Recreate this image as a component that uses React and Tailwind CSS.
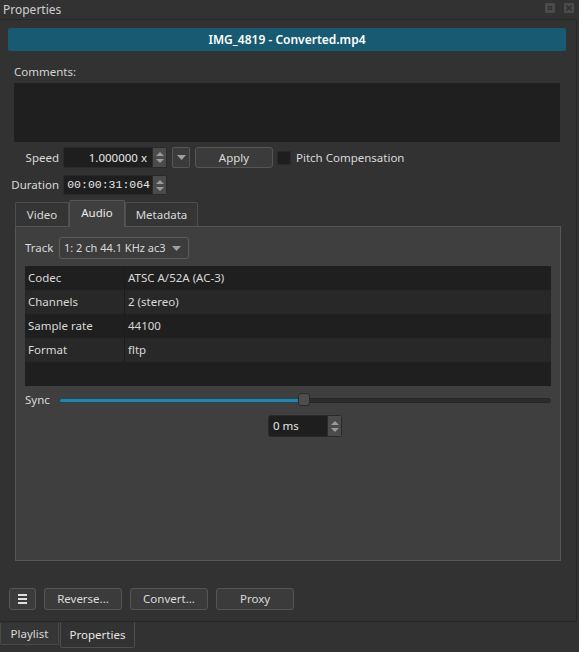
import React from 'react'

// small up/down arrow column used by the spin boxes
function SpinArrows({ className = '' }) {
  return (
    <div className={`flex w-[14px] flex-col items-center justify-center gap-[3px] border-l border-[#2a2a2a] bg-[#4b4b4b] ${className}`}>
      <svg width="8" height="4" viewBox="0 0 8 4"><path d="M0 4 L4 0 L8 4 Z" fill="#9a9a9a" /></svg>
      <svg width="8" height="4" viewBox="0 0 8 4"><path d="M0 0 L4 4 L8 0 Z" fill="#9a9a9a" /></svg>
    </div>
  )
}

function DownTri() {
  return (
    <svg width="9" height="5" viewBox="0 0 9 5"><path d="M0 0 L4.5 5 L9 0 Z" fill="#a0a0a0" /></svg>
  )
}

function Button({ children, className = '' }) {
  return (
    <div className={`flex h-[22px] items-center justify-center rounded-[3px] border border-[#565656] bg-[#3b3b3b] text-[#dcdcdc] ${className}`}>
      {children}
    </div>
  )
}

const ROWS = [
  ['Codec', 'ATSC A/52A (AC-3)'],
  ['Channels', '2 (stereo)'],
  ['Sample rate', '44100'],
  ['Format', 'fltp'],
  ['', ''],
]

export default function App() {
  return (
    <div className="flex h-[652px] w-[579px] flex-col bg-[#323232] font-['Noto_Sans',sans-serif] text-[11.5px] text-[#d9d9d9]">
      {/* dock title */}
      <div className="flex h-[19px] items-center justify-between pl-[3px] pr-[5px]">
        <span className="text-[12px] text-[#cfcfcf]">Properties</span>
        <div className="flex items-center gap-[9px] pb-[4px]">
          <div className="flex h-[10px] w-[10px] items-center justify-center rounded-[1px] bg-[#4a4a4a]">
            <div className="h-[4px] w-[4px] border border-[#2e2e2e]" />
          </div>
          <div className="flex h-[10px] w-[10px] items-center justify-center rounded-[1px] bg-[#4a4a4a]">
            <svg width="6" height="6" viewBox="0 0 6 6"><path d="M0.5 0.5 L5.5 5.5 M5.5 0.5 L0.5 5.5" stroke="#2e2e2e" strokeWidth="1.2" /></svg>
          </div>
        </div>
      </div>

      {/* dock body */}
      <div className="flex h-[603px] w-[577px] flex-col border-y border-r border-[#272727]">
        <div className="ml-[8px] mt-[8px] flex h-[23px] w-[558px] items-center justify-center rounded-[2px] bg-[#175a72] text-[12px] font-semibold text-white">
          IMG_4819 - Converted.mp4
        </div>

        <div className="ml-[14px] mt-[13px] flex h-[16px] items-center text-[#d4d4d4]">Comments:</div>
        <div className="ml-[14px] mt-[3px] h-[59px] w-[546px] bg-[#1f1f1f]" />

        {/* speed */}
        <div className="mt-[5px] flex h-[21px] items-center">
          <div className="w-[60px] pr-[1px] text-right">Speed</div>
          <div className="ml-[3px] flex h-full w-[104px] rounded-[2px] border border-[#2a2a2a] bg-[#1e1e1e]">
            <div className="flex flex-1 items-center justify-end pr-[5px] text-[#e6e6e6]">1.000000 x</div>
            <SpinArrows />
          </div>
          <div className="ml-[5px] flex h-full w-[18px] items-center justify-center rounded-[2px] border border-[#565656] bg-[#3b3b3b]">
            <DownTri />
          </div>
          <Button className="ml-[5px] !h-[21px] w-[78px]">Apply</Button>
          <div className="ml-[4px] h-[14px] w-[14px] border border-[#2a2a2a] bg-[#1e1e1e]" />
          <span className="ml-[5px]">Pitch Compensation</span>
        </div>

        {/* duration */}
        <div className="mt-[7px] flex h-[20px] items-center">
          <div className="w-[60px] pr-[1px] text-right">Duration</div>
          <div className="ml-[3px] flex h-full w-[104px] rounded-[2px] border border-[#2a2a2a] bg-[#1e1e1e]">
            <div className="flex flex-1 items-center justify-end pr-[2px] font-['Liberation_Mono',monospace] text-[11.5px] text-[#e6e6e6]">00:00:31:064</div>
            <SpinArrows />
          </div>
        </div>

        {/* tabs */}
        <div className="ml-[15px] mt-[5px] flex h-[26px] items-end">
          <div className="flex h-[24px] w-[54px] items-center justify-center rounded-t-[2px] border border-b-0 border-[#4e4e4e] bg-[#353535]">Video</div>
          <div className="relative z-10 -mb-px flex h-[27px] w-[56px] items-center justify-center rounded-t-[2px] border border-b-0 border-[#565656] bg-[#3f3f3f] pb-[3px] text-[#eaeaea]">Audio</div>
          <div className="flex h-[24px] w-[73px] items-center justify-center rounded-t-[2px] border border-b-0 border-[#4e4e4e] bg-[#353535]">Metadata</div>
        </div>

        <div className="ml-[15px] flex h-[335px] w-[546px] flex-col border border-[#565656] bg-[#3f3f3f] px-[9px]">
          <div className="mt-[10px] flex h-[22px] items-center">
            <span className="w-[34px]">Track</span>
            <div className="flex h-full w-[130px] items-center gap-[6px] whitespace-nowrap rounded-[3px] border border-[#5a5a5a] bg-[#3c3c3c] pl-[4px] text-[11px]">
              <span>1: 2 ch 44.1 KHz ac3</span>
              <DownTri />
            </div>
          </div>

          <div className="mt-[7px] flex flex-col">
            {ROWS.map(([k, v], i) => (
              <div key={i} className={`flex h-[24px] items-center ${i % 2 ? 'bg-[#282828]' : 'bg-[#1f1f1f]'}`}>
                <div className={`flex h-full w-[100px] items-center pl-[3px] ${k ? 'border-r border-[#1c1c1c]' : ''}`}>{k}</div>
                <div className="pl-[3px]">{v}</div>
              </div>
            ))}
          </div>

          {/* audio sync */}
          <div className="mt-[7px] flex">
            <span className="mt-[-2px] w-[34px]">Sync</span>
            <div className="flex flex-1 flex-col items-center">
              <div className="relative h-[14px] w-full">
                <div className="absolute left-0 right-0 top-[5px] h-[5px] rounded-full border border-[#262626] bg-[#2c2c2c]" />
                <div className="absolute left-0 top-[5px] h-[5px] w-[245px] rounded-l-full border border-[#1d4a5c] bg-[#2a82a8]" />
                <div className="absolute left-[239px] top-0 h-[13px] w-[12px] rounded-[3px] border border-[#2a2a2a] bg-[#4e4e4e]" />
              </div>
              <div className="mt-[8px] flex h-[22px] w-[74px] rounded-[3px] border border-[#2a2a2a] bg-[#1e1e1e]">
                <div className="flex flex-1 items-center pl-[4px] text-[#e6e6e6]">0 ms</div>
                <SpinArrows />
              </div>
            </div>
          </div>
        </div>

        {/* actions */}
        <div className="ml-[9px] mt-[27px] flex gap-[8px]">
          <Button className="w-[27px]">
            <svg width="9" height="10" viewBox="0 0 9 10"><path d="M0 1 H9 M0 5 H9 M0 9 H9" stroke="#e0e0e0" strokeWidth="2" /></svg>
          </Button>
          <Button className="w-[78px]">Reverse...</Button>
          <Button className="w-[78px]">Convert...</Button>
          <Button className="w-[78px]">Proxy</Button>
        </div>
      </div>

      {/* bottom dock tabs */}
      <div className="flex items-start">
        <div className="mt-[1px] flex h-[22px] w-[59px] items-center justify-center rounded-b-[2px] border border-t-0 border-[#4a4a4a] bg-[#363636]">Playlist</div>
        <div className="ml-[1px] flex h-[26px] w-[75px] items-center justify-center rounded-b-[2px] border border-t-0 border-[#4e4e4e] bg-[#323232] text-[#e6e6e6]">Properties</div>
      </div>
    </div>
  )
}
